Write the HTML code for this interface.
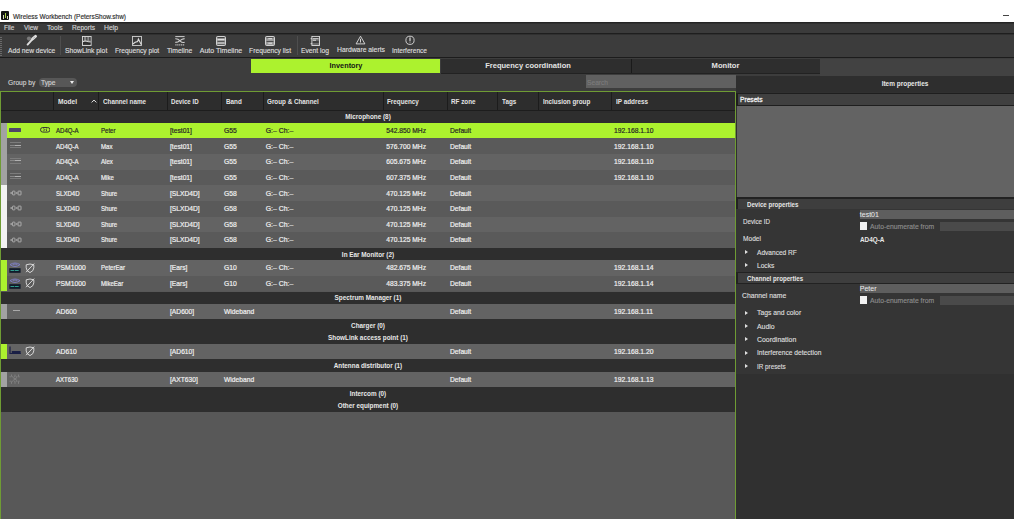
<!DOCTYPE html><html><head><meta charset="utf-8"><style>
*{box-sizing:border-box;margin:0;padding:0}
html,body{width:1014px;height:519px;overflow:hidden;background:#303030;font-family:"Liberation Sans",sans-serif;font-size:7px;color:#e8e8e8;position:relative}
.a{position:absolute}
.t{position:absolute;white-space:nowrap;line-height:1;transform-origin:0 0}
.b{font-weight:bold}
.tab{position:absolute;top:59px;height:14.3px;background:#2d2d2d}
.hsep{position:absolute;top:92px;height:18px;width:1px;background:#1c1c1c}
.tri{position:absolute;left:745px;width:0;height:0;border-top:2.4px solid transparent;border-bottom:2.4px solid transparent;border-left:3.2px solid #e0e0e0}
</style></head><body>
<div class="a" style="left:0px;top:0px;width:1014px;height:22.3px;background:#fff;"></div>
<div class="a" style="left:1.3px;top:11.3px;width:7.8px;height:8.3px;background:#141414;border-radius:1px"></div>
<div class="a" style="left:3.2px;top:14.5px;width:1px;height:4px;background:#d8dcc0;"></div>
<div class="a" style="left:5px;top:13.3px;width:1.4px;height:5.2px;background:#a6d040;"></div>
<div class="a" style="left:7px;top:15.5px;width:1px;height:3px;background:#d8dcc0;"></div>
<div class="t" style="left:12.5px;top:13.2px;font-size:7px;color:#2c2c2c;transform:scaleX(0.923);-webkit-text-stroke:0.15px #2c2c2c;">Wireless Workbench (PetersShow.shw)</div>
<div class="a" style="left:1003.2px;top:14.8px;width:6px;height:1.1px;background:#444;"></div>
<div class="a" style="left:0px;top:22.3px;width:1014px;height:1.2px;background:#242424;"></div>
<div class="a" style="left:0px;top:23.8px;width:1014px;height:9px;background:#3b3b3b;"></div>
<div class="a" style="left:0px;top:32.8px;width:1014px;height:1.7px;background:#1e1e1e;"></div>
<div class="t" style="left:4px;top:24.2px;font-size:7px;color:#d4d4d4;transform:scaleX(0.92);-webkit-text-stroke:0.15px #d4d4d4;">File</div>
<div class="t" style="left:23.7px;top:24.2px;font-size:7px;color:#d4d4d4;transform:scaleX(0.93);-webkit-text-stroke:0.15px #d4d4d4;">View</div>
<div class="t" style="left:47.4px;top:24.2px;font-size:7px;color:#d4d4d4;transform:scaleX(0.945);-webkit-text-stroke:0.15px #d4d4d4;">Tools</div>
<div class="t" style="left:72px;top:24.2px;font-size:7px;color:#d4d4d4;transform:scaleX(0.94);-webkit-text-stroke:0.15px #d4d4d4;">Reports</div>
<div class="t" style="left:103.8px;top:24.2px;font-size:7px;color:#d4d4d4;transform:scaleX(0.97);-webkit-text-stroke:0.15px #d4d4d4;">Help</div>
<div class="a" style="left:0px;top:34.5px;width:1014px;height:22.2px;background:#3c3c3c;"></div>
<div class="a" style="left:0px;top:56.7px;width:1014px;height:1.3px;background:#1c1c1c;"></div>
<div class="a" style="left:0px;top:37px;width:2px;height:1px;background:#6a6a6a;"></div>
<div class="a" style="left:0px;top:39px;width:2px;height:1px;background:#6a6a6a;"></div>
<div class="a" style="left:0px;top:41px;width:2px;height:1px;background:#6a6a6a;"></div>
<div class="a" style="left:0px;top:43px;width:2px;height:1px;background:#6a6a6a;"></div>
<div class="a" style="left:0px;top:45px;width:2px;height:1px;background:#6a6a6a;"></div>
<div class="a" style="left:0px;top:47px;width:2px;height:1px;background:#6a6a6a;"></div>
<div class="a" style="left:0px;top:49px;width:2px;height:1px;background:#6a6a6a;"></div>
<div class="a" style="left:0px;top:51px;width:2px;height:1px;background:#6a6a6a;"></div>
<div class="a" style="left:0px;top:53px;width:2px;height:1px;background:#6a6a6a;"></div>
<div class="a" style="left:0px;top:55px;width:2px;height:1px;background:#6a6a6a;"></div>
<div class="a" style="left:60px;top:36px;width:1px;height:19px;background:#4e4e4e;"></div>
<div class="a" style="left:297px;top:36px;width:1px;height:19px;background:#4e4e4e;"></div>
<div class="t" style="left:8px;top:47.0px;font-size:7px;color:#dcdcdc;transform:scaleX(0.955);-webkit-text-stroke:0.15px #dcdcdc;">Add new device</div>
<div class="t" style="left:65.2px;top:47.0px;font-size:7px;color:#dcdcdc;transform:scaleX(0.97);-webkit-text-stroke:0.15px #dcdcdc;">ShowLink plot</div>
<div class="t" style="left:115.2px;top:47.0px;font-size:7px;color:#dcdcdc;transform:scaleX(0.955);-webkit-text-stroke:0.15px #dcdcdc;">Frequency plot</div>
<div class="t" style="left:167.4px;top:47.0px;font-size:7px;color:#dcdcdc;transform:scaleX(0.96);-webkit-text-stroke:0.15px #dcdcdc;">Timeline</div>
<div class="t" style="left:199.8px;top:47.0px;font-size:7px;color:#dcdcdc;-webkit-text-stroke:0.15px #dcdcdc;">Auto Timeline</div>
<div class="t" style="left:248.9px;top:47.0px;font-size:7px;color:#dcdcdc;transform:scaleX(0.965);-webkit-text-stroke:0.15px #dcdcdc;">Frequency list</div>
<div class="t" style="left:301.3px;top:47.0px;font-size:7px;color:#dcdcdc;transform:scaleX(0.96);-webkit-text-stroke:0.15px #dcdcdc;">Event log</div>
<div class="t" style="left:336.7px;top:45.8px;font-size:7px;color:#dcdcdc;transform:scaleX(0.97);-webkit-text-stroke:0.15px #dcdcdc;">Hardware alerts</div>
<div class="t" style="left:392px;top:47.0px;font-size:7px;color:#dcdcdc;transform:scaleX(0.936);-webkit-text-stroke:0.15px #dcdcdc;">Interference</div>
<svg class="a" style="left:20px;top:33px" width="20" height="14" viewBox="0 0 20 14"><circle cx="9" cy="5.6" r="2.1" fill="#7a7a7a"/><path d="M7.6 11.6L12.3 6.4" stroke="#dedede" stroke-width="1.9" stroke-linecap="round"/><path d="M12.6 5.9L15.6 3.3" stroke="#dedede" stroke-width="2.8" stroke-linecap="round"/><path d="M13.6 5.3L14.4 4.4" stroke="#555" stroke-width="0.6"/></svg>
<svg class="a" style="left:82px;top:36px" width="10" height="10" viewBox="0 0 10 10"><rect x="0.5" y="0.5" width="8.6" height="9" fill="none" stroke="#dedede" stroke-width="0.9"/><rect x="1" y="1" width="7.6" height="4" fill="#8a8a8a"/><path d="M1.6 1V4.6M4.8 1V4.6M7.8 1V4.6" stroke="#2a2a2a" stroke-width="0.9"/><path d="M1 5.6Q3 4.6 5 5.3T8.6 5.8" stroke="#dedede" fill="none" stroke-width="1"/><path d="M1.3 7.6Q3 6 5 7T8.4 7.4" stroke="#2a2a2a" fill="none" stroke-width="1.2"/></svg>
<svg class="a" style="left:132px;top:36px" width="10" height="10" viewBox="0 0 10 10"><rect x="0.5" y="0.5" width="9" height="9" fill="none" stroke="#cfcfcf" stroke-width="0.9"/><path d="M0.8 8L3.2 6.2L5.6 5.6L6.4 3L9.2 8.4" stroke="#dedede" fill="none" stroke-width="1.1"/></svg>
<svg class="a" style="left:175px;top:36px" width="10" height="10" viewBox="0 0 10 10"><path d="M0.3 0.6H9.6" stroke="#dedede" stroke-width="0.9"/><path d="M0.3 2.8Q3 2.6 5 4.8T9.6 6.4M0.3 6.4Q3 6.4 5 4.6T9.6 2.6" stroke="#d0d0d0" fill="none" stroke-width="1.1"/><path d="M0.3 8.8H9.6" stroke="#bbb" stroke-width="1.2" stroke-dasharray="1.3 0.6"/></svg>
<svg class="a" style="left:216px;top:36px" width="10" height="10" viewBox="0 0 10 10"><rect x="0.5" y="0.5" width="9" height="9" rx="1" fill="#9a9a9a" stroke="#dedede" stroke-width="0.9"/><path d="M1.5 1.6H8.5M1.5 5.8H8.5" stroke="#2e2e2e" stroke-width="0.9"/><path d="M1.5 3.6H8.5M1.5 7H8.5" stroke="#eee" stroke-width="0.9"/><path d="M1.5 8.4H8.5" stroke="#444" stroke-width="0.7"/></svg>
<svg class="a" style="left:265px;top:36px" width="10" height="10" viewBox="0 0 10 10"><rect x="0.5" y="0.5" width="9" height="9" rx="1" fill="#9a9a9a" stroke="#dedede" stroke-width="0.9"/><path d="M1.5 1.6H8.5M1.5 5.5H8.5" stroke="#3a3a3a" stroke-width="0.8"/><path d="M3.3 2.7H7M3.3 7.2H7" stroke="#eee" stroke-width="0.9"/></svg>
<svg class="a" style="left:310px;top:36px" width="11" height="10" viewBox="0 0 11 10"><rect x="1.9" y="0.5" width="7.6" height="9" fill="#6a6a6a" stroke="#dedede" stroke-width="0.9"/><path d="M2.6 1.4H8.8" stroke="#2a2a2a" stroke-width="0.8"/><path d="M3 2.7H8.5" stroke="#ececec" stroke-width="0.8"/><path d="M3 4.3H6" stroke="#bbb" stroke-width="1.4"/><path d="M0.6 2.7H2M0.6 7.7H2" stroke="#dedede" stroke-width="0.9"/><path d="M2.6 6H8.8" stroke="#2e2e2e" stroke-width="1.4"/></svg>
<svg class="a" style="left:355px;top:35px" width="11" height="10" viewBox="0 0 11 10"><path d="M5.5 1.2L9.9 8.9H1.1Z" fill="none" stroke="#dedede" stroke-width="0.9" stroke-linejoin="round"/><path d="M5.5 3.8V7.5" stroke="#e6e6e6" stroke-width="0.9"/></svg>
<svg class="a" style="left:405px;top:35px" width="10" height="10" viewBox="0 0 10 10"><circle cx="5" cy="5.3" r="4.1" fill="none" stroke="#dedede" stroke-width="0.9"/><path d="M5 3V5.6" stroke="#bbb" stroke-width="1.5" stroke-linecap="round"/><circle cx="5" cy="7.1" r="0.6" fill="#bbb"/></svg>
<div class="a" style="left:0px;top:58px;width:1014px;height:33.2px;background:#3d3d3d;"></div>
<div class="a" style="left:251px;top:59px;width:189px;height:14.3px;background:#acf22e;"></div>
<div class="t b" style="left:45.5px;width:600px;text-align:center;top:62.4px;font-size:7.7px;color:#151515;transform-origin:50% 0;transform:scaleX(0.95);">Inventory</div>
<div class="a" style="left:441px;top:59px;width:190px;height:14.3px;background:#2e2e2e;"></div>
<div class="a" style="left:631px;top:59px;width:1px;height:14.3px;background:#1a1a1a;"></div>
<div class="t b" style="left:228px;width:600px;text-align:center;top:62.2px;font-size:7.6px;color:#e4e4e4;transform-origin:50% 0;transform:scaleX(0.99);">Frequency coordination</div>
<div class="a" style="left:632px;top:59px;width:188px;height:14.3px;background:#2e2e2e;"></div>
<div class="t b" style="left:425.5px;width:600px;text-align:center;top:62.2px;font-size:7.6px;color:#e4e4e4;transform-origin:50% 0;">Monitor</div>
<div class="a" style="left:441px;top:73px;width:379px;height:1px;background:#222;"></div>
<div class="a" style="left:820px;top:59px;width:194px;height:17px;background:#424242;"></div>
<div class="t" style="left:7.8px;top:79.2px;font-size:7px;color:#d0d0d0;transform:scaleX(0.95);-webkit-text-stroke:0.15px #d0d0d0;">Group by</div>
<div class="a" style="left:38.5px;top:77.7px;width:38.5px;height:9px;background:#575757;border-radius:4px"></div>
<div class="t" style="left:41px;top:79.2px;font-size:7px;color:#d0d0d0;transform:scaleX(0.95);-webkit-text-stroke:0.15px #d0d0d0;">Type</div>
<div class="a" style="left:70px;top:81px;width:0;height:0;border-left:2.8px solid transparent;border-right:2.8px solid transparent;border-top:3px solid #eee"></div>
<div class="a" style="left:585.5px;top:74.8px;width:150.5px;height:13.2px;background:#606060;"></div>
<div class="t" style="left:587px;top:78.5px;font-size:7px;color:#7c7c7c;transform:scaleX(0.95);-webkit-text-stroke:0.15px #7c7c7c;">Search</div>
<div class="a" style="left:0;top:91px;width:736px;height:428px;background:#585858;border:1px solid #6f9c34;border-bottom:none"></div>
<div class="a" style="left:1px;top:92px;width:734px;height:18.3px;background:#2d2d2d;"></div>
<div class="hsep" style="left:53px"></div>
<div class="hsep" style="left:98px"></div>
<div class="hsep" style="left:167px"></div>
<div class="hsep" style="left:221px"></div>
<div class="hsep" style="left:262.5px"></div>
<div class="hsep" style="left:382.5px"></div>
<div class="hsep" style="left:447px"></div>
<div class="hsep" style="left:497px"></div>
<div class="hsep" style="left:538px"></div>
<div class="hsep" style="left:611px"></div>
<div class="a" style="left:1px;top:110.3px;width:734px;height:0.7px;background:#1d1d1d;"></div>
<div class="t b" style="left:57.5px;top:98px;font-size:7px;color:#e4e4e4;transform:scaleX(0.94);">Model</div>
<div class="t b" style="left:102.6px;top:98px;font-size:7px;color:#e4e4e4;transform:scaleX(0.9);">Channel name</div>
<div class="t b" style="left:171.3px;top:98px;font-size:7px;color:#e4e4e4;transform:scaleX(0.876);">Device ID</div>
<div class="t b" style="left:225.6px;top:98px;font-size:7px;color:#e4e4e4;transform:scaleX(0.9);">Band</div>
<div class="t b" style="left:267.2px;top:98px;font-size:7px;color:#e4e4e4;transform:scaleX(0.9);">Group &amp; Channel</div>
<div class="t b" style="left:387.2px;top:98px;font-size:7px;color:#e4e4e4;transform:scaleX(0.9);">Frequency</div>
<div class="t b" style="left:451.3px;top:98px;font-size:7px;color:#e4e4e4;transform:scaleX(0.9);">RF zone</div>
<div class="t b" style="left:502.3px;top:98px;font-size:7px;color:#e4e4e4;transform:scaleX(0.9);">Tags</div>
<div class="t b" style="left:542.6px;top:98px;font-size:7px;color:#e4e4e4;transform:scaleX(0.9);">Inclusion group</div>
<div class="t b" style="left:615.6px;top:98px;font-size:7px;color:#e4e4e4;transform:scaleX(0.91);">IP address</div>
<svg class="a" style="left:90.5px;top:99px" width="6" height="4" viewBox="0 0 6 4"><path d="M0.6 3.4L3 1.1L5.4 3.4" stroke="#ddd" fill="none" stroke-width="1"/></svg>
<div class="a" style="left:1px;top:110.6px;width:734px;height:12.2px;background:#2e2e2e;"></div>
<div class="t b" style="left:68px;width:600px;text-align:center;top:114.2px;font-size:6.8px;color:#e8e8e8;transform-origin:50% 0;transform:scaleX(0.935);">Microphone (8)</div>
<div class="a" style="left:1px;top:122.8px;width:734px;height:15.65px;background:#acf22e;"></div>
<div class="a" style="left:1px;top:122.8px;width:5.9px;height:15.65px;background:#a2a2a2;"></div>
<div class="a" style="left:9px;top:127.80px;width:11.6px;height:3.8px;background:#4e4866;border-radius:0.5px"></div><svg class="a" style="left:39.8px;top:127.10px" width="10.5" height="5.6" viewBox="0 0 10.5 5.6"><rect x="0.5" y="0.5" width="9.5" height="4.6" rx="2.3" fill="none" stroke="#353535" stroke-width="1"/><path d="M3.6 1.4Q5.2 2.8 3.6 4.2M6.9 1.4Q5.3 2.8 6.9 4.2" fill="none" stroke="#353535" stroke-width="0.9"/></svg>
<div class="t" style="left:56px;top:127.9px;font-size:6.9px;color:#262626;transform:scaleX(0.88);-webkit-text-stroke:0.2px #262626">AD4Q-A</div>
<div class="t" style="left:101px;top:127.9px;font-size:6.9px;color:#262626;transform:scaleX(0.88);-webkit-text-stroke:0.2px #262626">Peter</div>
<div class="t" style="left:169.6px;top:127.9px;font-size:6.9px;color:#262626;transform:scaleX(0.97);-webkit-text-stroke:0.2px #262626">[test01]</div>
<div class="t" style="left:223.8px;top:127.9px;font-size:6.9px;color:#262626;transform:scaleX(0.98);-webkit-text-stroke:0.2px #262626">G55</div>
<div class="t" style="left:265.7px;top:127.9px;font-size:6.9px;color:#262626;-webkit-text-stroke:0.2px #262626">G:&#8211; Ch:&#8211;</div>
<div class="t" style="left:450px;top:127.9px;font-size:6.9px;color:#262626;transform:scaleX(0.97);-webkit-text-stroke:0.2px #262626">Default</div>
<div class="t" style="left:614.3px;top:127.9px;font-size:6.9px;color:#262626;transform:scaleX(0.98);-webkit-text-stroke:0.2px #262626">192.168.1.10</div>
<div class="t" style="left:366px;top:127.9px;width:60px;text-align:right;font-size:6.9px;color:#262626;-webkit-text-stroke:0.2px #262626;transform:scaleX(0.97);transform-origin:100% 0">542.850 MHz</div>
<div class="a" style="left:1px;top:138.45px;width:734px;height:15.65px;background:#5a5a5a;"></div>
<div class="a" style="left:1px;top:138.45px;width:5.9px;height:15.65px;background:#a2a2a2;"></div>
<div class="a" style="left:10px;top:141.85px;width:11px;height:0.8px;background:#7c7c7c"></div><div class="a" style="left:10px;top:144.75px;width:5px;height:0.9px;background:#888"></div><div class="a" style="left:15px;top:144.55px;width:6px;height:1.2px;background:#b0b0b0"></div><div class="a" style="left:10px;top:146.85px;width:11px;height:0.8px;background:#7a7a7a"></div>
<div class="t" style="left:56px;top:143.55px;font-size:6.9px;color:#f0f0f0;transform:scaleX(0.88);-webkit-text-stroke:0.2px #f0f0f0">AD4Q-A</div>
<div class="t" style="left:101px;top:143.55px;font-size:6.9px;color:#f0f0f0;transform:scaleX(0.88);-webkit-text-stroke:0.2px #f0f0f0">Max</div>
<div class="t" style="left:169.6px;top:143.55px;font-size:6.9px;color:#f0f0f0;transform:scaleX(0.97);-webkit-text-stroke:0.2px #f0f0f0">[test01]</div>
<div class="t" style="left:223.8px;top:143.55px;font-size:6.9px;color:#f0f0f0;transform:scaleX(0.98);-webkit-text-stroke:0.2px #f0f0f0">G55</div>
<div class="t" style="left:265.7px;top:143.55px;font-size:6.9px;color:#f0f0f0;-webkit-text-stroke:0.2px #f0f0f0">G:&#8211; Ch:&#8211;</div>
<div class="t" style="left:450px;top:143.55px;font-size:6.9px;color:#f0f0f0;transform:scaleX(0.97);-webkit-text-stroke:0.2px #f0f0f0">Default</div>
<div class="t" style="left:614.3px;top:143.55px;font-size:6.9px;color:#f0f0f0;transform:scaleX(0.98);-webkit-text-stroke:0.2px #f0f0f0">192.168.1.10</div>
<div class="t" style="left:366px;top:143.55px;width:60px;text-align:right;font-size:6.9px;color:#f0f0f0;-webkit-text-stroke:0.2px #f0f0f0;transform:scaleX(0.97);transform-origin:100% 0">576.700 MHz</div>
<div class="a" style="left:1px;top:154.1px;width:734px;height:15.65px;background:#636363;"></div>
<div class="a" style="left:1px;top:154.1px;width:5.9px;height:15.65px;background:#a2a2a2;"></div>
<div class="a" style="left:10px;top:157.50px;width:11px;height:0.8px;background:#7c7c7c"></div><div class="a" style="left:10px;top:160.40px;width:5px;height:0.9px;background:#888"></div><div class="a" style="left:15px;top:160.20px;width:6px;height:1.2px;background:#b0b0b0"></div><div class="a" style="left:10px;top:162.50px;width:11px;height:0.8px;background:#7a7a7a"></div>
<div class="t" style="left:56px;top:159.2px;font-size:6.9px;color:#f0f0f0;transform:scaleX(0.88);-webkit-text-stroke:0.2px #f0f0f0">AD4Q-A</div>
<div class="t" style="left:101px;top:159.2px;font-size:6.9px;color:#f0f0f0;transform:scaleX(0.88);-webkit-text-stroke:0.2px #f0f0f0">Alex</div>
<div class="t" style="left:169.6px;top:159.2px;font-size:6.9px;color:#f0f0f0;transform:scaleX(0.97);-webkit-text-stroke:0.2px #f0f0f0">[test01]</div>
<div class="t" style="left:223.8px;top:159.2px;font-size:6.9px;color:#f0f0f0;transform:scaleX(0.98);-webkit-text-stroke:0.2px #f0f0f0">G55</div>
<div class="t" style="left:265.7px;top:159.2px;font-size:6.9px;color:#f0f0f0;-webkit-text-stroke:0.2px #f0f0f0">G:&#8211; Ch:&#8211;</div>
<div class="t" style="left:450px;top:159.2px;font-size:6.9px;color:#f0f0f0;transform:scaleX(0.97);-webkit-text-stroke:0.2px #f0f0f0">Default</div>
<div class="t" style="left:614.3px;top:159.2px;font-size:6.9px;color:#f0f0f0;transform:scaleX(0.98);-webkit-text-stroke:0.2px #f0f0f0">192.168.1.10</div>
<div class="t" style="left:366px;top:159.2px;width:60px;text-align:right;font-size:6.9px;color:#f0f0f0;-webkit-text-stroke:0.2px #f0f0f0;transform:scaleX(0.97);transform-origin:100% 0">605.675 MHz</div>
<div class="a" style="left:1px;top:169.75px;width:734px;height:15.65px;background:#5a5a5a;"></div>
<div class="a" style="left:1px;top:169.75px;width:5.9px;height:15.65px;background:#a2a2a2;"></div>
<div class="a" style="left:10px;top:173.15px;width:11px;height:0.8px;background:#7c7c7c"></div><div class="a" style="left:10px;top:176.05px;width:5px;height:0.9px;background:#888"></div><div class="a" style="left:15px;top:175.85px;width:6px;height:1.2px;background:#b0b0b0"></div><div class="a" style="left:10px;top:178.15px;width:11px;height:0.8px;background:#7a7a7a"></div>
<div class="t" style="left:56px;top:174.85px;font-size:6.9px;color:#f0f0f0;transform:scaleX(0.88);-webkit-text-stroke:0.2px #f0f0f0">AD4Q-A</div>
<div class="t" style="left:101px;top:174.85px;font-size:6.9px;color:#f0f0f0;transform:scaleX(0.88);-webkit-text-stroke:0.2px #f0f0f0">Mike</div>
<div class="t" style="left:169.6px;top:174.85px;font-size:6.9px;color:#f0f0f0;transform:scaleX(0.97);-webkit-text-stroke:0.2px #f0f0f0">[test01]</div>
<div class="t" style="left:223.8px;top:174.85px;font-size:6.9px;color:#f0f0f0;transform:scaleX(0.98);-webkit-text-stroke:0.2px #f0f0f0">G55</div>
<div class="t" style="left:265.7px;top:174.85px;font-size:6.9px;color:#f0f0f0;-webkit-text-stroke:0.2px #f0f0f0">G:&#8211; Ch:&#8211;</div>
<div class="t" style="left:450px;top:174.85px;font-size:6.9px;color:#f0f0f0;transform:scaleX(0.97);-webkit-text-stroke:0.2px #f0f0f0">Default</div>
<div class="t" style="left:614.3px;top:174.85px;font-size:6.9px;color:#f0f0f0;transform:scaleX(0.98);-webkit-text-stroke:0.2px #f0f0f0">192.168.1.10</div>
<div class="t" style="left:366px;top:174.85px;width:60px;text-align:right;font-size:6.9px;color:#f0f0f0;-webkit-text-stroke:0.2px #f0f0f0;transform:scaleX(0.97);transform-origin:100% 0">607.375 MHz</div>
<div class="a" style="left:1px;top:185.4px;width:734px;height:15.65px;background:#636363;"></div>
<div class="a" style="left:1px;top:185.4px;width:5.9px;height:15.65px;background:#f2f2f2;"></div>
<svg class="a" style="left:9.5px;top:189.80px" width="12" height="6" viewBox="0 0 12 6"><path d="M0.4 3H2M1.2 2.2V3.8M6 3H7.6M6.8 2.2V3.8" stroke="#b4b4b4" stroke-width="0.8"/><rect x="2.4" y="1.1" width="2.6" height="3.8" rx="0.7" fill="none" stroke="#b4b4b4" stroke-width="0.9"/><rect x="8.1" y="1.1" width="2.9" height="3.8" rx="0.3" fill="none" stroke="#b4b4b4" stroke-width="0.9"/></svg>
<div class="t" style="left:56px;top:190.5px;font-size:6.9px;color:#f0f0f0;transform:scaleX(0.88);-webkit-text-stroke:0.2px #f0f0f0">SLXD4D</div>
<div class="t" style="left:101px;top:190.5px;font-size:6.9px;color:#f0f0f0;transform:scaleX(0.88);-webkit-text-stroke:0.2px #f0f0f0">Shure</div>
<div class="t" style="left:169.6px;top:190.5px;font-size:6.9px;color:#f0f0f0;transform:scaleX(0.97);-webkit-text-stroke:0.2px #f0f0f0">[SLXD4D]</div>
<div class="t" style="left:223.8px;top:190.5px;font-size:6.9px;color:#f0f0f0;transform:scaleX(0.98);-webkit-text-stroke:0.2px #f0f0f0">G58</div>
<div class="t" style="left:265.7px;top:190.5px;font-size:6.9px;color:#f0f0f0;-webkit-text-stroke:0.2px #f0f0f0">G:&#8211; Ch:&#8211;</div>
<div class="t" style="left:450px;top:190.5px;font-size:6.9px;color:#f0f0f0;transform:scaleX(0.97);-webkit-text-stroke:0.2px #f0f0f0">Default</div>
<div class="t" style="left:366px;top:190.5px;width:60px;text-align:right;font-size:6.9px;color:#f0f0f0;-webkit-text-stroke:0.2px #f0f0f0;transform:scaleX(0.97);transform-origin:100% 0">470.125 MHz</div>
<div class="a" style="left:1px;top:201.05px;width:734px;height:15.65px;background:#5a5a5a;"></div>
<div class="a" style="left:1px;top:201.05px;width:5.9px;height:15.65px;background:#f2f2f2;"></div>
<svg class="a" style="left:9.5px;top:205.45px" width="12" height="6" viewBox="0 0 12 6"><path d="M0.4 3H2M1.2 2.2V3.8M6 3H7.6M6.8 2.2V3.8" stroke="#b4b4b4" stroke-width="0.8"/><rect x="2.4" y="1.1" width="2.6" height="3.8" rx="0.7" fill="none" stroke="#b4b4b4" stroke-width="0.9"/><rect x="8.1" y="1.1" width="2.9" height="3.8" rx="0.3" fill="none" stroke="#b4b4b4" stroke-width="0.9"/></svg>
<div class="t" style="left:56px;top:206.15px;font-size:6.9px;color:#f0f0f0;transform:scaleX(0.88);-webkit-text-stroke:0.2px #f0f0f0">SLXD4D</div>
<div class="t" style="left:101px;top:206.15px;font-size:6.9px;color:#f0f0f0;transform:scaleX(0.88);-webkit-text-stroke:0.2px #f0f0f0">Shure</div>
<div class="t" style="left:169.6px;top:206.15px;font-size:6.9px;color:#f0f0f0;transform:scaleX(0.97);-webkit-text-stroke:0.2px #f0f0f0">[SLXD4D]</div>
<div class="t" style="left:223.8px;top:206.15px;font-size:6.9px;color:#f0f0f0;transform:scaleX(0.98);-webkit-text-stroke:0.2px #f0f0f0">G58</div>
<div class="t" style="left:265.7px;top:206.15px;font-size:6.9px;color:#f0f0f0;-webkit-text-stroke:0.2px #f0f0f0">G:&#8211; Ch:&#8211;</div>
<div class="t" style="left:450px;top:206.15px;font-size:6.9px;color:#f0f0f0;transform:scaleX(0.97);-webkit-text-stroke:0.2px #f0f0f0">Default</div>
<div class="t" style="left:366px;top:206.15px;width:60px;text-align:right;font-size:6.9px;color:#f0f0f0;-webkit-text-stroke:0.2px #f0f0f0;transform:scaleX(0.97);transform-origin:100% 0">470.125 MHz</div>
<div class="a" style="left:1px;top:216.7px;width:734px;height:15.65px;background:#636363;"></div>
<div class="a" style="left:1px;top:216.7px;width:5.9px;height:15.65px;background:#f2f2f2;"></div>
<svg class="a" style="left:9.5px;top:221.10px" width="12" height="6" viewBox="0 0 12 6"><path d="M0.4 3H2M1.2 2.2V3.8M6 3H7.6M6.8 2.2V3.8" stroke="#b4b4b4" stroke-width="0.8"/><rect x="2.4" y="1.1" width="2.6" height="3.8" rx="0.7" fill="none" stroke="#b4b4b4" stroke-width="0.9"/><rect x="8.1" y="1.1" width="2.9" height="3.8" rx="0.3" fill="none" stroke="#b4b4b4" stroke-width="0.9"/></svg>
<div class="t" style="left:56px;top:221.8px;font-size:6.9px;color:#f0f0f0;transform:scaleX(0.88);-webkit-text-stroke:0.2px #f0f0f0">SLXD4D</div>
<div class="t" style="left:101px;top:221.8px;font-size:6.9px;color:#f0f0f0;transform:scaleX(0.88);-webkit-text-stroke:0.2px #f0f0f0">Shure</div>
<div class="t" style="left:169.6px;top:221.8px;font-size:6.9px;color:#f0f0f0;transform:scaleX(0.97);-webkit-text-stroke:0.2px #f0f0f0">[SLXD4D]</div>
<div class="t" style="left:223.8px;top:221.8px;font-size:6.9px;color:#f0f0f0;transform:scaleX(0.98);-webkit-text-stroke:0.2px #f0f0f0">G58</div>
<div class="t" style="left:265.7px;top:221.8px;font-size:6.9px;color:#f0f0f0;-webkit-text-stroke:0.2px #f0f0f0">G:&#8211; Ch:&#8211;</div>
<div class="t" style="left:450px;top:221.8px;font-size:6.9px;color:#f0f0f0;transform:scaleX(0.97);-webkit-text-stroke:0.2px #f0f0f0">Default</div>
<div class="t" style="left:366px;top:221.8px;width:60px;text-align:right;font-size:6.9px;color:#f0f0f0;-webkit-text-stroke:0.2px #f0f0f0;transform:scaleX(0.97);transform-origin:100% 0">470.125 MHz</div>
<div class="a" style="left:1px;top:232.35px;width:734px;height:15.65px;background:#5a5a5a;"></div>
<div class="a" style="left:1px;top:232.35px;width:5.9px;height:15.65px;background:#f2f2f2;"></div>
<svg class="a" style="left:9.5px;top:236.75px" width="12" height="6" viewBox="0 0 12 6"><path d="M0.4 3H2M1.2 2.2V3.8M6 3H7.6M6.8 2.2V3.8" stroke="#b4b4b4" stroke-width="0.8"/><rect x="2.4" y="1.1" width="2.6" height="3.8" rx="0.7" fill="none" stroke="#b4b4b4" stroke-width="0.9"/><rect x="8.1" y="1.1" width="2.9" height="3.8" rx="0.3" fill="none" stroke="#b4b4b4" stroke-width="0.9"/></svg>
<div class="t" style="left:56px;top:237.45px;font-size:6.9px;color:#f0f0f0;transform:scaleX(0.88);-webkit-text-stroke:0.2px #f0f0f0">SLXD4D</div>
<div class="t" style="left:101px;top:237.45px;font-size:6.9px;color:#f0f0f0;transform:scaleX(0.88);-webkit-text-stroke:0.2px #f0f0f0">Shure</div>
<div class="t" style="left:169.6px;top:237.45px;font-size:6.9px;color:#f0f0f0;transform:scaleX(0.97);-webkit-text-stroke:0.2px #f0f0f0">[SLXD4D]</div>
<div class="t" style="left:223.8px;top:237.45px;font-size:6.9px;color:#f0f0f0;transform:scaleX(0.98);-webkit-text-stroke:0.2px #f0f0f0">G58</div>
<div class="t" style="left:265.7px;top:237.45px;font-size:6.9px;color:#f0f0f0;-webkit-text-stroke:0.2px #f0f0f0">G:&#8211; Ch:&#8211;</div>
<div class="t" style="left:450px;top:237.45px;font-size:6.9px;color:#f0f0f0;transform:scaleX(0.97);-webkit-text-stroke:0.2px #f0f0f0">Default</div>
<div class="t" style="left:366px;top:237.45px;width:60px;text-align:right;font-size:6.9px;color:#f0f0f0;-webkit-text-stroke:0.2px #f0f0f0;transform:scaleX(0.97);transform-origin:100% 0">470.125 MHz</div>
<div class="a" style="left:1px;top:248.0px;width:734px;height:12.2px;background:#2e2e2e;"></div>
<div class="t b" style="left:68px;width:600px;text-align:center;top:251.6px;font-size:6.8px;color:#e8e8e8;transform-origin:50% 0;transform:scaleX(0.935);">In Ear Monitor (2)</div>
<div class="a" style="left:1px;top:260.2px;width:734px;height:15.65px;background:#636363;"></div>
<div class="a" style="left:1px;top:260.2px;width:5.9px;height:15.65px;background:#acf22e;"></div>
<svg class="a" style="left:9px;top:262.00px" width="12" height="11" viewBox="0 0 12 11"><path d="M1 2.6Q6 -0.6 11 2.6Q6 6.4 1 2.6Z" fill="none" stroke="#8080c8" stroke-width="0.9"/><path d="M3.6 2.6Q6 1.4 8.4 2.6" stroke="#8080c8" fill="none" stroke-width="0.8"/><rect x="0.3" y="6.2" width="11.3" height="4.6" fill="#101a2a"/><path d="M1.5 8.5H10.4" stroke="#2f9a8c" stroke-width="1.1" stroke-dasharray="3.8 0.6"/></svg><svg class="a" style="left:24.5px;top:262.80px" width="10" height="10" viewBox="0 0 10 10"><path d="M1.2 1.8Q5 0.2 8.8 1.8V4.8Q8.8 8 5 9.6Q1.2 8 1.2 4.8Z" fill="none" stroke="#e2e2e2" stroke-width="0.9"/><path d="M9.2 0.6L1 9.2" stroke="#e2e2e2" stroke-width="0.9"/></svg>
<div class="t" style="left:56px;top:265.3px;font-size:6.9px;color:#f0f0f0;transform:scaleX(0.98);-webkit-text-stroke:0.2px #f0f0f0">PSM1000</div>
<div class="t" style="left:101px;top:265.3px;font-size:6.9px;color:#f0f0f0;transform:scaleX(0.88);-webkit-text-stroke:0.2px #f0f0f0">PeterEar</div>
<div class="t" style="left:169.6px;top:265.3px;font-size:6.9px;color:#f0f0f0;transform:scaleX(0.97);-webkit-text-stroke:0.2px #f0f0f0">[Ears]</div>
<div class="t" style="left:223.8px;top:265.3px;font-size:6.9px;color:#f0f0f0;transform:scaleX(0.98);-webkit-text-stroke:0.2px #f0f0f0">G10</div>
<div class="t" style="left:265.7px;top:265.3px;font-size:6.9px;color:#f0f0f0;-webkit-text-stroke:0.2px #f0f0f0">G:&#8211; Ch:&#8211;</div>
<div class="t" style="left:450px;top:265.3px;font-size:6.9px;color:#f0f0f0;transform:scaleX(0.97);-webkit-text-stroke:0.2px #f0f0f0">Default</div>
<div class="t" style="left:614.3px;top:265.3px;font-size:6.9px;color:#f0f0f0;transform:scaleX(0.98);-webkit-text-stroke:0.2px #f0f0f0">192.168.1.14</div>
<div class="t" style="left:366px;top:265.3px;width:60px;text-align:right;font-size:6.9px;color:#f0f0f0;-webkit-text-stroke:0.2px #f0f0f0;transform:scaleX(0.97);transform-origin:100% 0">482.675 MHz</div>
<div class="a" style="left:1px;top:275.85px;width:734px;height:15.65px;background:#5a5a5a;"></div>
<div class="a" style="left:1px;top:275.85px;width:5.9px;height:15.65px;background:#acf22e;"></div>
<svg class="a" style="left:9px;top:277.65px" width="12" height="11" viewBox="0 0 12 11"><path d="M1 2.6Q6 -0.6 11 2.6Q6 6.4 1 2.6Z" fill="none" stroke="#8080c8" stroke-width="0.9"/><path d="M3.6 2.6Q6 1.4 8.4 2.6" stroke="#8080c8" fill="none" stroke-width="0.8"/><rect x="0.3" y="6.2" width="11.3" height="4.6" fill="#101a2a"/><path d="M1.5 8.5H10.4" stroke="#2f9a8c" stroke-width="1.1" stroke-dasharray="3.8 0.6"/></svg><svg class="a" style="left:24.5px;top:278.45px" width="10" height="10" viewBox="0 0 10 10"><path d="M1.2 1.8Q5 0.2 8.8 1.8V4.8Q8.8 8 5 9.6Q1.2 8 1.2 4.8Z" fill="none" stroke="#e2e2e2" stroke-width="0.9"/><path d="M9.2 0.6L1 9.2" stroke="#e2e2e2" stroke-width="0.9"/></svg>
<div class="t" style="left:56px;top:280.95px;font-size:6.9px;color:#f0f0f0;transform:scaleX(0.98);-webkit-text-stroke:0.2px #f0f0f0">PSM1000</div>
<div class="t" style="left:101px;top:280.95px;font-size:6.9px;color:#f0f0f0;transform:scaleX(0.88);-webkit-text-stroke:0.2px #f0f0f0">MikeEar</div>
<div class="t" style="left:169.6px;top:280.95px;font-size:6.9px;color:#f0f0f0;transform:scaleX(0.97);-webkit-text-stroke:0.2px #f0f0f0">[Ears]</div>
<div class="t" style="left:223.8px;top:280.95px;font-size:6.9px;color:#f0f0f0;transform:scaleX(0.98);-webkit-text-stroke:0.2px #f0f0f0">G10</div>
<div class="t" style="left:265.7px;top:280.95px;font-size:6.9px;color:#f0f0f0;-webkit-text-stroke:0.2px #f0f0f0">G:&#8211; Ch:&#8211;</div>
<div class="t" style="left:450px;top:280.95px;font-size:6.9px;color:#f0f0f0;transform:scaleX(0.97);-webkit-text-stroke:0.2px #f0f0f0">Default</div>
<div class="t" style="left:614.3px;top:280.95px;font-size:6.9px;color:#f0f0f0;transform:scaleX(0.98);-webkit-text-stroke:0.2px #f0f0f0">192.168.1.14</div>
<div class="t" style="left:366px;top:280.95px;width:60px;text-align:right;font-size:6.9px;color:#f0f0f0;-webkit-text-stroke:0.2px #f0f0f0;transform:scaleX(0.97);transform-origin:100% 0">483.375 MHz</div>
<div class="a" style="left:1px;top:291.5px;width:734px;height:12.2px;background:#2e2e2e;"></div>
<div class="t b" style="left:68px;width:600px;text-align:center;top:295.1px;font-size:6.8px;color:#e8e8e8;transform-origin:50% 0;transform:scaleX(0.935);">Spectrum Manager (1)</div>
<div class="a" style="left:1px;top:303.7px;width:734px;height:15.65px;background:#636363;"></div>
<div class="a" style="left:1px;top:303.7px;width:5.9px;height:15.65px;background:#a2a2a2;"></div>
<div class="a" style="left:12.7px;top:310.00px;width:7px;height:1.1px;background:#aaa"></div>
<div class="t" style="left:56px;top:308.8px;font-size:6.9px;color:#f0f0f0;transform:scaleX(0.98);-webkit-text-stroke:0.2px #f0f0f0">AD600</div>
<div class="t" style="left:169.6px;top:308.8px;font-size:6.9px;color:#f0f0f0;transform:scaleX(0.97);-webkit-text-stroke:0.2px #f0f0f0">[AD600]</div>
<div class="t" style="left:223.8px;top:308.8px;font-size:6.9px;color:#f0f0f0;transform:scaleX(0.97);-webkit-text-stroke:0.2px #f0f0f0">Wideband</div>
<div class="t" style="left:450px;top:308.8px;font-size:6.9px;color:#f0f0f0;transform:scaleX(0.97);-webkit-text-stroke:0.2px #f0f0f0">Default</div>
<div class="t" style="left:614.3px;top:308.8px;font-size:6.9px;color:#f0f0f0;transform:scaleX(0.98);-webkit-text-stroke:0.2px #f0f0f0">192.168.1.11</div>
<div class="a" style="left:1px;top:319.35px;width:734px;height:12.2px;background:#2e2e2e;"></div>
<div class="t b" style="left:68px;width:600px;text-align:center;top:322.95px;font-size:6.8px;color:#e8e8e8;transform-origin:50% 0;transform:scaleX(0.935);">Charger (0)</div>
<div class="a" style="left:1px;top:331.55px;width:734px;height:12.2px;background:#2e2e2e;"></div>
<div class="t b" style="left:68px;width:600px;text-align:center;top:335.15px;font-size:6.8px;color:#e8e8e8;transform-origin:50% 0;transform:scaleX(0.935);">ShowLink access point (1)</div>
<div class="a" style="left:1px;top:343.75px;width:734px;height:15.65px;background:#636363;"></div>
<div class="a" style="left:1px;top:343.75px;width:5.9px;height:15.65px;background:#acf22e;"></div>
<svg class="a" style="left:9px;top:346.25px" width="12" height="9" viewBox="0 0 12 9"><path d="M1 0.5V7.5H11.6" stroke="#1a1f45" stroke-width="1.2" fill="none"/><rect x="2.8" y="5" width="8.8" height="3" fill="#1a1f45"/></svg><svg class="a" style="left:24.5px;top:346.35px" width="10" height="10" viewBox="0 0 10 10"><path d="M1.2 1.8Q5 0.2 8.8 1.8V4.8Q8.8 8 5 9.6Q1.2 8 1.2 4.8Z" fill="none" stroke="#e2e2e2" stroke-width="0.9"/><path d="M9.2 0.6L1 9.2" stroke="#e2e2e2" stroke-width="0.9"/></svg>
<div class="t" style="left:56px;top:348.85px;font-size:6.9px;color:#f0f0f0;transform:scaleX(0.98);-webkit-text-stroke:0.2px #f0f0f0">AD610</div>
<div class="t" style="left:169.6px;top:348.85px;font-size:6.9px;color:#f0f0f0;transform:scaleX(0.97);-webkit-text-stroke:0.2px #f0f0f0">[AD610]</div>
<div class="t" style="left:450px;top:348.85px;font-size:6.9px;color:#f0f0f0;transform:scaleX(0.97);-webkit-text-stroke:0.2px #f0f0f0">Default</div>
<div class="t" style="left:614.3px;top:348.85px;font-size:6.9px;color:#f0f0f0;transform:scaleX(0.98);-webkit-text-stroke:0.2px #f0f0f0">192.168.1.20</div>
<div class="a" style="left:1px;top:359.4px;width:734px;height:12.2px;background:#2e2e2e;"></div>
<div class="t b" style="left:68px;width:600px;text-align:center;top:363.0px;font-size:6.8px;color:#e8e8e8;transform-origin:50% 0;transform:scaleX(0.935);">Antenna distributor (1)</div>
<div class="a" style="left:1px;top:371.6px;width:734px;height:15.65px;background:#636363;"></div>
<div class="a" style="left:1px;top:371.6px;width:5.9px;height:15.65px;background:#a2a2a2;"></div>
<svg class="a" style="left:9px;top:373.20px" width="12" height="12" viewBox="0 0 12 12"><path d="M0.5 3.8H11.5M0.5 8.2H11.5" stroke="#8c8c8c" stroke-width="0.7" stroke-dasharray="1.4 0.8" fill="none"/><path d="M2.5 1.5V3.5M6 1.5V3.5M9.5 1.5V3.5M2.5 8.5V10.8M6 8.5V10.8M9.5 8.5V10.8M4 4.5L8 7.5M8 4.5L4 7.5" stroke="#8c8c8c" stroke-width="0.7" fill="none"/></svg>
<div class="t" style="left:56px;top:376.7px;font-size:6.9px;color:#f0f0f0;transform:scaleX(0.88);-webkit-text-stroke:0.2px #f0f0f0">AXT630</div>
<div class="t" style="left:169.6px;top:376.7px;font-size:6.9px;color:#f0f0f0;transform:scaleX(0.97);-webkit-text-stroke:0.2px #f0f0f0">[AXT630]</div>
<div class="t" style="left:223.8px;top:376.7px;font-size:6.9px;color:#f0f0f0;transform:scaleX(0.97);-webkit-text-stroke:0.2px #f0f0f0">Wideband</div>
<div class="t" style="left:450px;top:376.7px;font-size:6.9px;color:#f0f0f0;transform:scaleX(0.97);-webkit-text-stroke:0.2px #f0f0f0">Default</div>
<div class="t" style="left:614.3px;top:376.7px;font-size:6.9px;color:#f0f0f0;transform:scaleX(0.98);-webkit-text-stroke:0.2px #f0f0f0">192.168.1.13</div>
<div class="a" style="left:1px;top:387.25px;width:734px;height:12.2px;background:#2e2e2e;"></div>
<div class="t b" style="left:68px;width:600px;text-align:center;top:390.85px;font-size:6.8px;color:#e8e8e8;transform-origin:50% 0;transform:scaleX(0.935);">Intercom (0)</div>
<div class="a" style="left:1px;top:399.45px;width:734px;height:12.2px;background:#2e2e2e;"></div>
<div class="t b" style="left:68px;width:600px;text-align:center;top:403.05px;font-size:6.8px;color:#e8e8e8;transform-origin:50% 0;transform:scaleX(0.935);">Other equipment (0)</div>
<div class="a" style="left:736px;top:76.4px;width:278px;height:16.1px;background:#2e2e2e;"></div>
<div class="t b" style="left:605.4px;width:600px;text-align:center;top:80.2px;font-size:7.2px;color:#e6e6e6;transform-origin:50% 0;transform:scaleX(0.9);">Item properties</div>
<div class="a" style="left:736px;top:92.5px;width:278px;height:1.5px;background:#262626;"></div>
<div class="a" style="left:736px;top:92.5px;width:278px;height:13.5px;background:#1e1e1e;"></div>
<div class="a" style="left:737.5px;top:94px;width:277px;height:10.6px;background:#404040;"></div>
<div class="t" style="left:740px;top:96.0px;font-size:7px;color:#ececec;transform:scaleX(0.95);-webkit-text-stroke:0.3px #ececec">Presets</div>
<div class="a" style="left:737px;top:106px;width:277px;height:91px;background:#636363;"></div>
<div class="a" style="left:736px;top:197px;width:278px;height:322px;background:#303030;"></div>
<div class="a" style="left:736px;top:209px;width:278px;height:164.5px;background:#353535;"></div>
<div class="a" style="left:736px;top:196.8px;width:278px;height:12.5px;background:#222;"></div>
<div class="a" style="left:737.5px;top:198.6px;width:277px;height:10.4px;background:#3e3e3e;"></div>
<div class="t b" style="left:747.1px;top:200.6px;font-size:7px;color:#e6e6e6;transform:scaleX(0.875);">Device properties</div>
<div class="t" style="left:742.7px;top:217.8px;font-size:7px;color:#dcdcdc;transform:scaleX(0.89);-webkit-text-stroke:0.15px #dcdcdc;">Device ID</div>
<div class="a" style="left:859.5px;top:210.2px;width:155px;height:9.3px;background:#5e5e5e;"></div>
<div class="t" style="left:859.8px;top:211.0px;font-size:7px;color:#e8e8e8;-webkit-text-stroke:0.05px #e8e8e8;">test01</div>
<div class="a" style="left:859.5px;top:222.2px;width:7.3px;height:7.5px;background:#f2f2f2;"></div>
<div class="t" style="left:869.7px;top:222.7px;font-size:7px;color:#8c8c8c;transform:scaleX(0.97);-webkit-text-stroke:0.15px #8c8c8c;">Auto-enumerate from</div>
<div class="a" style="left:940px;top:221.5px;width:74px;height:9px;background:#4a4a4a;"></div>
<div class="t" style="left:742.7px;top:235.4px;font-size:7px;color:#dcdcdc;transform:scaleX(0.94);-webkit-text-stroke:0.15px #dcdcdc;">Model</div>
<div class="t b" style="left:859.5px;top:235.8px;font-size:7px;color:#e8e8e8;transform:scaleX(0.91);">AD4Q-A</div>
<div class="tri" style="top:249.8px"></div>
<div class="t" style="left:756.7px;top:248.8px;font-size:7px;color:#dcdcdc;transform:scaleX(0.94);-webkit-text-stroke:0.15px #dcdcdc;">Advanced RF</div>
<div class="tri" style="top:263.1px"></div>
<div class="t" style="left:756.7px;top:262.2px;font-size:7px;color:#dcdcdc;transform:scaleX(0.945);-webkit-text-stroke:0.15px #dcdcdc;">Locks</div>
<div class="a" style="left:736px;top:271.5px;width:278px;height:12px;background:#222;"></div>
<div class="a" style="left:737.5px;top:272.8px;width:277px;height:10.2px;background:#3e3e3e;"></div>
<div class="t b" style="left:747.1px;top:274.6px;font-size:7px;color:#e6e6e6;transform:scaleX(0.88);">Channel properties</div>
<div class="t" style="left:742.3px;top:291.6px;font-size:7px;color:#dcdcdc;transform:scaleX(0.97);-webkit-text-stroke:0.15px #dcdcdc;">Channel name</div>
<div class="a" style="left:859.5px;top:284.3px;width:155px;height:9px;background:#5e5e5e;"></div>
<div class="t" style="left:859.8px;top:285.0px;font-size:7px;color:#e8e8e8;-webkit-text-stroke:0.05px #e8e8e8;">Peter</div>
<div class="a" style="left:859.5px;top:296.4px;width:7.3px;height:7.4px;background:#f2f2f2;"></div>
<div class="t" style="left:869.7px;top:296.9px;font-size:7px;color:#8c8c8c;transform:scaleX(0.97);-webkit-text-stroke:0.15px #8c8c8c;">Auto-enumerate from</div>
<div class="a" style="left:940px;top:295.8px;width:74px;height:9px;background:#4a4a4a;"></div>
<div class="tri" style="top:310.6px"></div>
<div class="t" style="left:756.7px;top:309.4px;font-size:7px;color:#dcdcdc;transform:scaleX(0.97);-webkit-text-stroke:0.15px #dcdcdc;">Tags and color</div>
<div class="tri" style="top:324.0px"></div>
<div class="t" style="left:756.7px;top:322.8px;font-size:7px;color:#dcdcdc;transform:scaleX(0.99);-webkit-text-stroke:0.15px #dcdcdc;">Audio</div>
<div class="tri" style="top:337.2px"></div>
<div class="t" style="left:756.7px;top:336.0px;font-size:7px;color:#dcdcdc;transform:scaleX(0.99);-webkit-text-stroke:0.15px #dcdcdc;">Coordination</div>
<div class="tri" style="top:350.6px"></div>
<div class="t" style="left:756.7px;top:349.4px;font-size:7px;color:#dcdcdc;transform:scaleX(0.95);-webkit-text-stroke:0.15px #dcdcdc;">Interference detection</div>
<div class="tri" style="top:364.1px"></div>
<div class="t" style="left:756.7px;top:362.9px;font-size:7px;color:#dcdcdc;transform:scaleX(0.9);-webkit-text-stroke:0.15px #dcdcdc;">IR presets</div>
</body></html>
